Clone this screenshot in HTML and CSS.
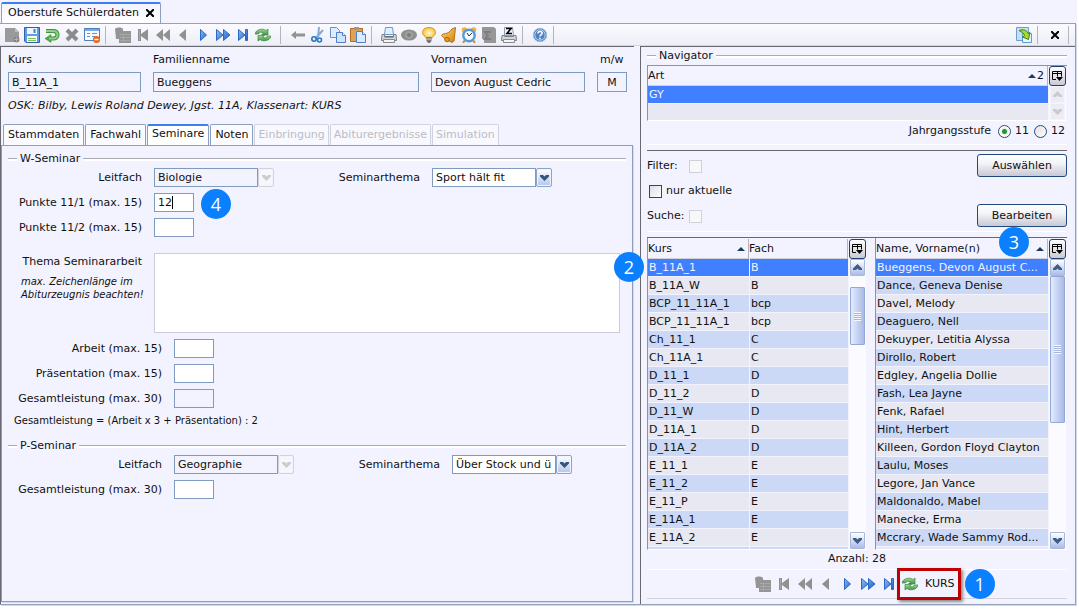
FILE: index.html
```html
<!DOCTYPE html>
<html lang="de">
<head>
<meta charset="utf-8">
<title>Oberstufe Schülerdaten</title>
<link rel="stylesheet" href="styles.css">
</head>
<body>
<svg class="sprite" aria-hidden="true">
  <defs>
    <linearGradient id="g-blue" x1="0" y1="0" x2="1" y2="1"><stop offset="0" stop-color="#8fc0f5"/><stop offset="1" stop-color="#1a5cc4"/></linearGradient>
    <linearGradient id="g-green" x1="0" y1="0" x2="0" y2="1"><stop offset="0" stop-color="#a5d896"/><stop offset="1" stop-color="#3c9440"/></linearGradient>
    <linearGradient id="g-gold" x1="0" y1="0" x2="1" y2="1"><stop offset="0" stop-color="#ffe27a"/><stop offset="1" stop-color="#cf7d0c"/></linearGradient>
    <radialGradient id="g-bulb"><stop offset="0" stop-color="#fffde0"/><stop offset="1" stop-color="#fbc02d"/></radialGradient>
    <symbol id="i-new" viewBox="0 0 16 16"><path d="M1 1h10l4 4v10H1z" fill="#9a9a9a"/><path d="M11 1v4h4z" fill="#bdbdbd"/><circle cx="12.500" cy="12.500" r="3" fill="#858585"/><path d="M12.500 10.500v4M10.500 12.500h4" stroke="#b5b5b5"/></symbol>
    <symbol id="i-save" viewBox="0 0 16 16"><path d="M.5.5h15v15H2L.5 14z" fill="#5f9de0" stroke="#2d62a8"/><path d="M3 1h10v6H3z" fill="#eef5ff"/><path d="M10.500 2v4" stroke="#4a7dc0" stroke-width="2"/><path d="M3 9h10v6H3z" fill="#fff"/><path d="M4 11.500h8M4 13.500h8" stroke="#78c65a"/></symbol>
    <symbol id="i-undo" viewBox="0 0 16 16"><path d="M2 4h7c3 0 4.500 1.500 4.500 3.700S12 11.500 9 11.500H6" fill="none" stroke="#3f9445" stroke-width="4"/><path d="M7 7.500v8L1 11.500z" fill="#4ba650" stroke="#3f9445" stroke-width=".6"/><path d="M2 4h7c3 0 4.500 1.500 4.500 3.700S12 11.500 9 11.500H5" fill="none" stroke="#8ed184" stroke-width="2"/></symbol>
    <symbol id="i-delete" viewBox="0 0 16 16"><path d="M3 3l10 10M13 3L3 13" stroke="#8c8c8c" stroke-width="4"/></symbol>
    <symbol id="i-form" viewBox="0 0 16 16"><path d="M.5 1.500h15v12H.5z" fill="#f6faff" stroke="#4b80bd"/><path d="M1 2h14v2H1z" fill="#79aae2"/><path d="M3 6.500h3M8 6.500h5M3 9.500h3M8 9.500h3" stroke="#6a94c8"/><circle cx="12.500" cy="12.500" r="3.500" fill="#e8641b"/><path d="M10.500 12.500h4" stroke="#fff" stroke-width="1.500"/></symbol>
    <symbol id="i-list" viewBox="0 0 16 16"><path d="M0 2c1-2 7-2 8 0v2h8v12H4v-4H1z" fill="#959595"/><path d="M5 7.500h10M5 10.500h10M5 13.500h10M8.500 7v8" stroke="#a8a8a8"/></symbol>
    <symbol id="i-first" viewBox="0 0 16 16"><path d="M3 2h3v5l7-5v12L6 9v5H3z" fill="#919191"/><path d="M4.500 3v10" stroke="#a8a8a8"/></symbol>
    <symbol id="i-rewind" viewBox="0 0 16 16"><path d="M8 2v12L1 8zM15 2v12L8 8z" fill="#919191"/></symbol>
    <symbol id="i-prev" viewBox="0 0 16 16"><path d="M11 2v12L4 8z" fill="#919191"/></symbol>
    <symbol id="i-next" viewBox="0 0 16 16"><path d="M5.500 2.500v11L11.500 8z" fill="url(#g-blue)" stroke="#2a69c8"/></symbol>
    <symbol id="i-forward" viewBox="0 0 16 16"><path d="M1.500 2.500v11L8 8zM8.500 2.500v11L15 8z" fill="url(#g-blue)" stroke="#2a69c8"/></symbol>
    <symbol id="i-last" viewBox="0 0 16 16"><path d="M3.500 2.500v11L10 8zM10.500 2.500h2v11h-2z" fill="url(#g-blue)" stroke="#2a69c8"/></symbol>
    <symbol id="i-refresh" viewBox="0 0 16 16"><path d="M0 7c1-5 8-6 11-3.500L13 2v6H6.500l2-2C6.500 4.800 4 5 3.500 7z" fill="url(#g-green)" stroke="#388a3c" stroke-width=".7"/><path d="M16 9c-1 5-8 6-11 3.500L3 14V8.500h6.500l-2 1.800c2 1 4.500.7 5-1.300z" fill="url(#g-green)" stroke="#388a3c" stroke-width=".7"/></symbol>
    <symbol id="i-back" viewBox="0 0 16 16"><path d="M1 8l5-4v2.500h9v3H6V12z" fill="#929292"/></symbol>
    <symbol id="i-cut" viewBox="0 0 16 16"><path d="M9 0l-1 10M13 3L6 11" stroke="#87aad2" stroke-width="2"/><circle cx="4" cy="12" r="2.200" fill="#dcecff" stroke="#2c76bd" stroke-width="1.600"/><circle cx="9.500" cy="13" r="2" fill="#dcecff" stroke="#2c76bd" stroke-width="1.600"/></symbol>
    <symbol id="i-copy" viewBox="0 0 16 16"><path d="M.5.500h6l3 3v7h-9z" fill="#dfebff" stroke="#6690ca"/><path d="M6.500 5.500h6l3 3v7h-9z" fill="#cfe2ff" stroke="#4e7fc4"/><path d="M12.500 5.500v3h3" fill="#fff" stroke="#4e7fc4"/></symbol>
    <symbol id="i-paste" viewBox="0 0 16 16"><path d="M.5 1.500h12v13H.5z" fill="#dda257" stroke="#b36b20"/><path d="M4 0h5v3H4z" fill="#999"/><path d="M6.500 4.500h6l3 3v8h-9z" fill="#dceaff" stroke="#4e7fc4"/><path d="M12.500 4.500v3h3" fill="#fff" stroke="#4e7fc4"/></symbol>
    <symbol id="i-print" viewBox="0 0 16 16"><path d="M4.500.500h7l1 7h-9z" fill="#dff0ff" stroke="#6d9cc8"/><path d="M1 7.500h2.500v2h9v-2H15l.5 6H.5z" fill="#d4d6db" stroke="#7b8087"/><path d="M3.500 10h9" stroke="#5a6067"/><path d="M2.500 12.500h11v3h-11z" fill="#f4f4f4" stroke="#8a8a8a"/></symbol>
    <symbol id="i-eye" viewBox="0 0 16 16"><ellipse cx="8" cy="8" rx="8" ry="5.500" fill="#8f8f8f"/><circle cx="8" cy="8" r="3.800" fill="#a2a2a2"/><circle cx="8" cy="8" r="2" fill="#7b7b7b"/></symbol>
    <symbol id="i-bulb" viewBox="0 0 16 16"><path d="M8 .500c4.500 0 6.500 2.500 6.500 5 0 3-3 3.500-4 6H5.500c-1-2.500-4-3-4-6 0-2.500 2-5 6.500-5z" fill="url(#g-bulb)" stroke="#dc9520"/><path d="M5.500 10h5v4l-1.500 2H7l-1.500-2z" fill="#777"/><path d="M6 12h4" stroke="#ddd"/></symbol>
    <symbol id="i-bell" viewBox="0 0 16 16"><path d="M14.500.500L13 14l-2 1.500C8 14 3 11.500.5 8.500L2 7c4 0 7-2 9-5z" fill="url(#g-gold)" stroke="#b96d10"/><circle cx="6" cy="12.500" r="2.300" fill="#e39a20" stroke="#a9620c"/></symbol>
    <symbol id="i-clock" viewBox="0 0 16 16"><circle cx="3.500" cy="3" r="2.800" fill="#f2b13e"/><circle cx="12.500" cy="3" r="2.800" fill="#f2b13e"/><path d="M4 13l-2 3M12 13l2 3" stroke="#d8882a" stroke-width="2"/><circle cx="8" cy="8.500" r="5.700" fill="#f4faff" stroke="#5a9ad4" stroke-width="2.400"/><path d="M6 6l2 3 3-3" fill="none" stroke="#333"/></symbol>
    <symbol id="i-sum" viewBox="0 0 16 16"><path d="M1 0h12l2 2v14H3v-4H1z" fill="#979797"/><path d="M10 5H4l3 3.500L4 12h6" fill="none" stroke="#7f7f7f" stroke-width="2"/></symbol>
    <symbol id="i-printz" viewBox="0 0 16 16"><path d="M3.500.500h8l1 8h-9z" fill="#e8f2fb" stroke="#8aa2b8"/><path d="M1 8.500h2.500v1h9v-1H15l.5 5H.5z" fill="#d4d6db" stroke="#7b8087"/><path d="M5 1.500h5L6 6.500h5" fill="none" stroke="#000" stroke-width="1.600"/><path d="M2.500 12.500h11v3h-11z" fill="#f4f4f4" stroke="#8a8a8a"/></symbol>
    <symbol id="i-help" viewBox="0 0 16 16"><circle cx="8" cy="8" r="6.700" fill="#4c83c4" stroke="#9bb9dd"/><circle cx="8" cy="8" r="5.200" fill="none" stroke="#d5e4f5" stroke-width=".8"/><path d="M6 6.500c0-3 4.200-2.500 4.200-.3C10.200 7.700 8 7.700 8 9.500M8 10.700v1.600" fill="none" stroke="#fff" stroke-width="1.500"/></symbol>
    <symbol id="i-export" viewBox="0 0 16 16"><path d="M.5.500h12v13H.5z" fill="#c4e0f8" stroke="#6ca0cc"/><path d="M6.500 6.500h9v9h-9z" fill="#e8f6ff" stroke="#5c9cd0"/><path d="M3 3.500c4-1.500 8-.5 9 3l2-1-1.500 7-6-2.500 2-1.200C8 6.500 6 5 3 3.500z" fill="#a2dc2c" stroke="#3d7d1c"/></symbol>
    <symbol id="i-columns" viewBox="0 0 13 12"><path d="M1.500 1.500h9v5M1.500 1.500v8H5M1 3.500h10M6.500 1.500v5" fill="none" stroke="#000"/><path d="M5 7h7l-3.500 4z" fill="#000"/></symbol>
    <symbol id="i-down" viewBox="0 0 9 7"><path d="M0 1h3l1.500 1.500L6 1h3v1.500L4.500 7 0 2.500z" fill="currentColor"/></symbol>
    <symbol id="i-up" viewBox="0 0 9 7"><path d="M0 6h3l1.500-1.500L6 6h3V4.500L4.500 0 0 4.500z" fill="currentColor"/></symbol>
    <symbol id="i-sort" viewBox="0 0 8 4"><path d="M0 4l4-4 4 4z" fill="#1c3a60"/></symbol>
    <symbol id="i-close" viewBox="0 0 8 8"><path d="M0 0l8 8M8 0L0 8" stroke="#000" stroke-width="2"/></symbol>
  </defs>
</svg>

<div class="window">
  <header class="doc-tabs">
    <div class="doc-tab">Oberstufe Schülerdaten<button class="plain" aria-label="Schließen"><svg class="close"><use href="#i-close"/></svg></button></div>
  </header>

  <div class="frame">
    <div class="toolbar">
      <button class="tool" aria-label="Neu"><svg><use href="#i-new"/></svg></button>
      <button class="tool" aria-label="Speichern"><svg><use href="#i-save"/></svg></button>
      <button class="tool" aria-label="Rückgängig"><svg><use href="#i-undo"/></svg></button>
      <button class="tool" aria-label="Löschen"><svg><use href="#i-delete"/></svg></button>
      <button class="tool" aria-label="Formular"><svg><use href="#i-form"/></svg></button>
      <span class="sep"></span>
      <button class="tool" aria-label="Liste"><svg><use href="#i-list"/></svg></button>
      <button class="tool" aria-label="Erster"><svg><use href="#i-first"/></svg></button>
      <button class="tool" aria-label="Schnell zurück"><svg><use href="#i-rewind"/></svg></button>
      <button class="tool" aria-label="Zurück"><svg><use href="#i-prev"/></svg></button>
      <button class="tool" aria-label="Weiter"><svg><use href="#i-next"/></svg></button>
      <button class="tool" aria-label="Schnell weiter"><svg><use href="#i-forward"/></svg></button>
      <button class="tool" aria-label="Letzter"><svg><use href="#i-last"/></svg></button>
      <button class="tool" aria-label="Aktualisieren"><svg><use href="#i-refresh"/></svg></button>
      <span class="sep sep-wide"></span>
      <button class="tool" aria-label="Vorige Maske"><svg><use href="#i-back"/></svg></button>
      <button class="tool" aria-label="Ausschneiden"><svg><use href="#i-cut"/></svg></button>
      <button class="tool" aria-label="Kopieren"><svg><use href="#i-copy"/></svg></button>
      <button class="tool" aria-label="Einfügen"><svg><use href="#i-paste"/></svg></button>
      <span class="sep"></span>
      <button class="tool" aria-label="Drucken"><svg><use href="#i-print"/></svg></button>
      <button class="tool" aria-label="Vorschau"><svg><use href="#i-eye"/></svg></button>
      <button class="tool" aria-label="Hinweis"><svg><use href="#i-bulb"/></svg></button>
      <button class="tool" aria-label="Benachrichtigung"><svg><use href="#i-bell"/></svg></button>
      <button class="tool" aria-label="Wiedervorlage"><svg><use href="#i-clock"/></svg></button>
      <button class="tool" aria-label="Summe"><svg><use href="#i-sum"/></svg></button>
      <button class="tool" aria-label="Zeugnis drucken"><svg><use href="#i-printz"/></svg></button>
      <span class="sep"></span>
      <button class="tool" aria-label="Hilfe"><svg><use href="#i-help"/></svg></button>
      <span class="sep"></span>
      <span class="spacer"></span>
      <button class="tool" aria-label="Exportieren"><svg><use href="#i-export"/></svg></button>
      <span class="sep"></span>
      <button class="tool" aria-label="Maske schließen"><svg class="close"><use href="#i-close"/></svg></button>
      <span class="sep"></span>
    </div>

    <main class="main">
      <section class="editor">
        <span class="callout callout-2">2</span>
        <div class="person">
          <label class="stack">Kurs<input class="box" value="B_11A_1" readonly></label>
          <label class="stack">Familienname<input class="box" value="Bueggens" readonly></label>
          <label class="stack">Vornamen<input class="box" value="Devon August Cedric" readonly></label>
          <label class="stack">m/w<input class="box center" value="M" readonly></label>
        </div>
        <p class="summary">OSK: Bilby, Lewis Roland Dewey, Jgst. 11A, Klassenart: KURS</p>

        <nav class="tabs">
          <button class="tab">Stammdaten</button>
          <button class="tab">Fachwahl</button>
          <button class="tab active">Seminare</button>
          <button class="tab">Noten</button>
          <button class="tab" disabled>Einbringung</button>
          <button class="tab" disabled>Abiturergebnisse</button>
          <button class="tab" disabled>Simulation</button>
        </nav>

        <div class="panel">
          <h2 class="legend">W-Seminar</h2>
          <div class="form form-top">
            <label for="w-fach">Leitfach</label>
            <div class="line">
              <span class="combo off"><select id="w-fach" disabled><option>Biologie</option></select><span class="arrow"><svg><use href="#i-down"/></svg></span></span>
              <label class="theme" for="w-thema">Seminarthema</label>
              <span class="combo"><select id="w-thema"><option>Sport hält fit</option></select><span class="arrow"><svg><use href="#i-down"/></svg></span></span>
            </div>
            <label for="p1">Punkte 11/1 (max. 15)</label>
            <div class="line"><span class="caret-box"><input id="p1" class="box points" value="12"></span><span class="callout callout-4">4</span></div>
            <label for="p2">Punkte 11/2 (max. 15)</label>
            <div class="line"><input id="p2" class="box points"></div>
          </div>
          <div class="form form-area">
            <div class="area-label">
              <label for="thema">Thema Seminararbeit</label>
              <p class="hint">max. Zeichenlänge im<br>Abiturzeugnis beachten!</p>
            </div>
            <textarea id="thema"></textarea>
          </div>
          <div class="form form-wide">
            <label for="arbeit">Arbeit (max. 15)</label>
            <div class="line"><input id="arbeit" class="box points"></div>
            <label for="praes">Präsentation (max. 15)</label>
            <div class="line"><input id="praes" class="box points"></div>
            <label for="gesamt">Gesamtleistung (max. 30)</label>
            <div class="line"><input id="gesamt" class="box points" readonly></div>
          </div>
          <p class="formula">Gesamtleistung = (Arbeit x 3 + Präsentation) : 2</p>

          <h2 class="legend">P-Seminar</h2>
          <div class="form form-wide">
            <label for="p-fach">Leitfach</label>
            <div class="line">
              <span class="combo off"><select id="p-fach" disabled><option>Geographie</option></select><span class="arrow"><svg><use href="#i-down"/></svg></span></span>
              <label class="theme" for="p-thema">Seminarthema</label>
              <span class="combo"><select id="p-thema"><option>Über Stock und ü</option></select><span class="arrow"><svg><use href="#i-down"/></svg></span></span>
            </div>
            <label for="p-gesamt">Gesamtleistung (max. 30)</label>
            <div class="line"><input id="p-gesamt" class="box points"></div>
          </div>
        </div>
      </section>

      <aside class="navigator">
        <h2 class="legend">Navigator</h2>
        <div class="grid-box art">
          <table>
            <thead><tr><th><span class="th">Art<span class="sort"><svg><use href="#i-sort"/></svg>2</span></span></th></tr></thead>
            <tbody><tr class="selected"><td>GY</td></tr><tr><td></td></tr></tbody>
          </table>
          <div class="side">
            <button class="cols" aria-label="Spalten"><svg><use href="#i-columns"/></svg></button>
            <div class="scroll off"><span class="scroll-btn"><svg><use href="#i-up"/></svg></span><span class="scroll-btn"><svg><use href="#i-down"/></svg></span></div>
          </div>
        </div>
        <div class="year">
          <span>Jahrgangsstufe</span>
          <label><input type="radio" name="stufe" checked>11</label>
          <label><input type="radio" name="stufe">12</label>
        </div>

        <div class="rule"></div>
        <div class="filters">
          <div class="checks">
            <div class="check"><label for="filter">Filter:</label><input id="filter" type="checkbox" disabled></div>
            <div class="check tight"><input id="aktuell" type="checkbox"><label for="aktuell">nur aktuelle</label></div>
            <div class="check"><label for="suche">Suche:</label><input id="suche" type="checkbox" disabled></div>
          </div>
          <div class="actions">
            <button class="push">Auswählen</button>
            <button class="push">Bearbeiten</button>
            <span class="callout callout-3">3</span>
          </div>
        </div>
        <div class="rule"></div>

        <div class="lists">
          <div class="grid-box kurse">
            <div class="clip"><table>
              <thead><tr><th class="col-kurs"><span class="th">Kurs<span class="sort"><svg><use href="#i-sort"/></svg></span></span></th><th>Fach</th></tr></thead>
              <tbody>
                <tr class="selected"><td>B_11A_1</td><td>B</td></tr>
                <tr><td>B_11A_W</td><td>B</td></tr>
                <tr><td>BCP_11_11A_1</td><td>bcp</td></tr>
                <tr><td>BCP_11_11A_1</td><td>bcp</td></tr>
                <tr><td>Ch_11_1</td><td>C</td></tr>
                <tr><td>Ch_11A_1</td><td>C</td></tr>
                <tr><td>D_11_1</td><td>D</td></tr>
                <tr><td>D_11_2</td><td>D</td></tr>
                <tr><td>D_11_W</td><td>D</td></tr>
                <tr><td>D_11A_1</td><td>D</td></tr>
                <tr><td>D_11A_2</td><td>D</td></tr>
                <tr><td>E_11_1</td><td>E</td></tr>
                <tr><td>E_11_2</td><td>E</td></tr>
                <tr><td>E_11_P</td><td>E</td></tr>
                <tr><td>E_11A_1</td><td>E</td></tr>
                <tr><td>E_11A_2</td><td>E</td></tr>
                <tr><td></td><td></td></tr>
              </tbody>
            </table></div>
            <div class="side">
              <button class="cols" aria-label="Spalten"><svg><use href="#i-columns"/></svg></button>
              <div class="scroll"><span class="scroll-btn"><svg><use href="#i-up"/></svg></span><span class="track"><span class="thumb short"></span></span><span class="scroll-btn"><svg><use href="#i-down"/></svg></span></div>
            </div>
          </div>
          <div class="grid-box namen">
            <div class="clip"><table>
              <thead><tr><th><span class="th">Name, Vorname(n)<span class="sort"><svg><use href="#i-sort"/></svg></span></span></th></tr></thead>
              <tbody>
                <tr class="selected"><td>Bueggens, Devon August C...</td></tr>
                <tr><td>Dance, Geneva Denise</td></tr>
                <tr><td>Davel, Melody</td></tr>
                <tr><td>Deaguero, Nell</td></tr>
                <tr><td>Dekuyper, Letitia Alyssa</td></tr>
                <tr><td>Dirollo, Robert</td></tr>
                <tr><td>Edgley, Angelia Dollie</td></tr>
                <tr><td>Fash, Lea Jayne</td></tr>
                <tr><td>Fenk, Rafael</td></tr>
                <tr><td>Hint, Herbert</td></tr>
                <tr><td>Killeen, Gordon Floyd Clayton</td></tr>
                <tr><td>Laulu, Moses</td></tr>
                <tr><td>Legore, Jan Vance</td></tr>
                <tr><td>Maldonaldo, Mabel</td></tr>
                <tr><td>Manecke, Erma</td></tr>
                <tr><td>Mccrary, Wade Sammy Rod...</td></tr>
                <tr><td></td></tr>
              </tbody>
            </table></div>
            <div class="side">
              <button class="cols" aria-label="Spalten"><svg><use href="#i-columns"/></svg></button>
              <div class="scroll"><span class="scroll-btn"><svg><use href="#i-up"/></svg></span><span class="track"><span class="thumb long"></span></span><span class="scroll-btn"><svg><use href="#i-down"/></svg></span></div>
            </div>
          </div>
        </div>
        <p class="count">Anzahl: 28</p>
        <footer class="pager">
          <div class="steps">
            <button class="tool" aria-label="Liste"><svg><use href="#i-list"/></svg></button>
            <button class="tool" aria-label="Erster"><svg><use href="#i-first"/></svg></button>
            <button class="tool" aria-label="Schnell zurück"><svg><use href="#i-rewind"/></svg></button>
            <button class="tool" aria-label="Zurück"><svg><use href="#i-prev"/></svg></button>
            <button class="tool" aria-label="Weiter"><svg><use href="#i-next"/></svg></button>
            <button class="tool" aria-label="Schnell weiter"><svg><use href="#i-forward"/></svg></button>
            <button class="tool" aria-label="Letzter"><svg><use href="#i-last"/></svg></button>
          </div>
          <button class="marked"><svg><use href="#i-refresh"/></svg>KURS</button>
          <span class="callout">1</span>
        </footer>
      </aside>
    </main>
  </div>
</div>
</body>
</html>
```

FILE: styles.css
```css
* { box-sizing: border-box; }

body {
  margin: 0;
  background: #fff;
  color: #111;
  font: 11px/14px "DejaVu Sans", Verdana, sans-serif;
}

button, input, select, textarea {
  margin: 0;
  padding: 0;
  border: 0;
  border-radius: 0;
  background: none;
  color: inherit;
  font: inherit;
}

h2, p { margin: 0; font-size: 11px; font-weight: normal; }
svg { display: block; width: 16px; height: 16px; }
.sprite { position: absolute; width: 0; height: 0; }

.window {
  display: flex;
  flex-direction: column;
  min-height: 100vh;
  padding-bottom: 4px;
  margin-right: 2px;
}

.doc-tabs { padding: 2px 1px 0; background: #f3f3ff; }
.doc-tab {
  display: inline-flex;
  align-items: center;
  gap: 7px;
  height: 21px;
  padding: 0 6px 2px;
  border: 1px solid #8c9fc0;
  border-top: 2px solid #3d7df0;
  border-bottom: 0;
  border-radius: 2px 2px 0 0;
  background: linear-gradient(#f3f3ff, #fff);
  vertical-align: top;
}
.plain { display: flex; }
.close { width: 8px; height: 8px; }

.frame {
  display: flex;
  flex: 1;
  flex-direction: column;
  margin-right: 1px;
  border: solid #92a2be;
  border-width: 1px 1px 1px 0;
  background: #f3f3ff;
  box-shadow: 1px 1px 0 #d5daea;
}

.toolbar {
  display: flex;
  align-items: center;
  height: 22px;
  padding: 0 6px 0 2px;
  border-bottom: 1px solid #d5d5de;
  background: linear-gradient(#fafaff, #eeeef8);
}
.tool { display: flex; align-items: center; justify-content: center; width: 20px; height: 20px; }
.sep { width: 1px; height: 18px; margin: 0 7px 0 3px; background: #b4b4bd; }
.sep-wide { margin-left: 7px; }
.sep:last-child { margin-right: 0; }
.spacer { flex: 1; }

.main { display: flex; flex: 1; gap: 6px; }

.editor {
  position: relative;
  display: flex;
  flex: 1;
  flex-direction: column;
  padding: 6px 1px 2px 0;
  border-top: 1px solid #686870;
  border-left: 1px solid #686870;
  min-width: 0;
}

.person {
  display: grid;
  grid-template-columns: 133fr 266fr 154fr 30fr;
  gap: 12px;
  padding: 0 6px 0 7px;
}
.stack { display: flex; flex-direction: column; gap: 5px; }
.stack:last-child { text-indent: 3px; }
.box {
  width: 100%;
  min-width: 0;
  height: 20px;
  padding: 0 3px;
  border: 1px solid #7f9bc0;
  background: #fff;
}
.box:read-only { background: #f3f3ff; }
.center { text-align: center; text-indent: 0; }
.summary { padding: 7px 7px 0; font-style: italic; }

.tabs { display: flex; align-items: stretch; gap: 1px; height: 21px; margin-top: 11px; padding-left: 2px; }
.tab {
  padding: 0 4px;
  border: 1px solid #8c9fc0;
  border-bottom: 0;
  border-radius: 2px 2px 0 0;
  background: #fbfbff;
  white-space: nowrap;
}
.tab.active { padding-bottom: 4px; border-top: 2px solid #3d7df0; background: #fff; }
.tab:disabled { padding: 0 3px; border-color: #d0d2df; background: #f8f8ff; color: #bcbcc6; }

.panel {
  flex: 1;
  padding: 6px;
  border: 1px solid #8c9fc0;
  box-shadow: 1px 1px 0 #d5daea;
}

.legend { display: flex; align-items: center; gap: 3px; }
.legend::before, .legend::after {
  content: "";
  height: 2px;
  border-top: 1px solid #a9a9b3;
  background: #fff;
}
.legend::before { width: 9px; }
.legend::after { flex: 1; }

.form { display: grid; grid-template-columns: 134px 1fr; gap: 6px 12px; align-items: center; }
.form > label { text-align: right; white-space: nowrap; }
.form-top { padding-top: 2px; }
.form-wide { grid-template-columns: 154px 1fr; padding-top: 2px; }
.line { position: relative; display: flex; align-items: center; height: 19px; }
.points { width: 40px; height: 19px; }
.caret-box { position: relative; }
.caret-box::after {
  content: "";
  position: absolute;
  top: 3px;
  left: 18px;
  width: 1px;
  height: 13px;
  background: #000;
}

.combo { display: flex; width: 120px; height: 19px; }
.combo select {
  appearance: none;
  flex: 1;
  min-width: 0;
  padding: 0 3px;
  border: 1px solid #7f9bc0;
  background: #fff;
  color: #111;
  opacity: 1;
  text-overflow: clip;
}
.arrow {
  display: flex;
  align-items: center;
  justify-content: center;
  width: 16px;
  border: 1px solid #8ba5c9;
  border-radius: 2px;
  background: linear-gradient(#fff, #b4c5ea);
  box-shadow: inset 0 0 0 1px #f0f4ff;
  color: #35557f;
}
.arrow svg, .scroll-btn svg { width: 9px; height: 7px; }
.combo.off select { background: #f3f3ff; }
.combo.off .arrow { border-color: #d2d2dd; background: #f6f6fb; color: #ccccd5; }
.theme { width: 158px; padding-right: 12px; text-align: right; }

.form-area { align-items: start; padding: 16px 6px 0 0; }
.area-label { display: flex; flex-direction: column; gap: 6px; padding-top: 2px; text-align: right; }
.hint, .formula { font-size: 10px; line-height: 13px; }
.hint { padding-left: 13px; font-style: italic; text-align: left; white-space: nowrap; }
textarea {
  display: block;
  width: 100%;
  height: 80px;
  border: 1px solid #ccccd8;
  background: #fff;
  resize: none;
}
.form-area + .form-wide { padding-top: 6px; }
.formula { padding: 6px 6px 12px; }

.callout {
  display: flex;
  align-items: center;
  justify-content: center;
  width: 30px;
  height: 30px;
  border-radius: 50%;
  background: #0a80ff;
  color: #fff;
  font: 18px/30px "Open Sans", sans-serif;
}
.callout-2 { position: absolute; z-index: 2; top: 205px; right: -10px; }
.callout-3 { position: absolute; z-index: 2; top: 76px; right: 38px; }
.callout-4 { position: absolute; top: -4px; left: 47px; }

.navigator {
  display: flex;
  flex-direction: column;
  width: 435px;
  padding: 2px 8px 5px 6px;
  border-top: 1px solid #686870;
  border-left: 1px solid #686870;
}

.grid-box { display: flex; border: 1px solid #92929c; border-right: 0; border-bottom-color: #fff; min-width: 0; }
.grid-box table { width: 100%; border-collapse: separate; border-spacing: 0; table-layout: fixed; }
.grid-box th {
  height: 20px;
  padding: 0 1px 0 0;
  border-right: 1px solid #b4b4bd;
  border-bottom: 1px solid #d0d0da;
  font-weight: normal;
  text-align: left;
}
.th { display: flex; align-items: center; justify-content: space-between; }
.sort { display: flex; align-items: center; gap: 1px; padding-right: 2px; }
.sort svg { width: 8px; height: 4px; }
.grid-box td {
  height: 18px;
  padding: 0 1px;
  border-bottom: 1px solid #f3f3ff;
  background: #e7e8f1;
  overflow: hidden;
  text-overflow: ellipsis;
  white-space: nowrap;
}
.grid-box td + td { border-left: 1px solid #f3f3ff; }
.col-kurs { width: 101px; }
.kurse tbody tr:nth-child(odd) td, .namen tbody tr:nth-child(even) td { background: #ccd9f6; }
.grid-box tbody tr.selected td { background: #4080ff; color: #f3f3ff; }
.art { margin-top: 2px; height: 56px; overflow: hidden; }

.clip { flex: 1; min-width: 0; height: 310px; overflow: hidden; }
.side { display: flex; flex: none; flex-direction: column; width: 19px; padding: 0 1px; }
.cols {
  display: flex;
  align-items: center;
  justify-content: center;
  width: 17px;
  height: 20px;
  border: 1px solid #1f3f74;
  border-radius: 3px;
  background: linear-gradient(#fff, #c9c9d4);
}
.cols svg { width: 13px; height: 12px; }
.scroll { display: flex; flex: 1; flex-direction: column; width: 17px; padding: 0 1px; background: #fbfbff; }
.scroll-btn {
  display: flex;
  align-items: center;
  justify-content: center;
  height: 17px;
  border: 1px solid #a9b9dc;
  border-radius: 1px;
  background: linear-gradient(#fff, #aabce8);
  color: #3d5c88;
}
.scroll.off .scroll-btn { border-color: #f3f3ff; background: #ececf2; color: #cacad2; }
.track { flex: 1; padding-top: 11px; }
.thumb {
  display: flex;
  align-items: center;
  justify-content: center;
  height: 58px;
  border: 1px solid #93a8d6;
  border-radius: 1px;
  background: linear-gradient(90deg, #e2ebff, #a9bae4);
}
.thumb::after {
  content: "";
  width: 7px;
  height: 9px;
  background: repeating-linear-gradient(#f6f9ff 0 1px, #a5b6dd 1px 2px);
}
.namen .track { padding-top: 0; }
.thumb.long { height: 147px; }

.year { display: flex; align-items: center; justify-content: flex-end; gap: 5px; padding: 3px 2px 0 0; }
.year span { padding-right: 2px; }
.year label { display: flex; align-items: center; gap: 4px; }
input[type="radio"], input[type="checkbox"] {
  appearance: none;
  flex: none;
  width: 13px;
  height: 13px;
  border: 1px solid #234a7c;
  background: linear-gradient(135deg, #dedee6, #fff);
}
input[type="radio"] { border-radius: 50%; }
input[type="radio"]:checked { background: radial-gradient(#259332 0 2px, #e2f3e5 3px, #fff 5px); }
input[type="checkbox"]:disabled { border-color: #d0d0da; background: #f8f8fa; }

.rule { height: 7px; margin-top: 6px; border-top: 1px solid #fff; border-bottom: 1px solid #686870; }
.filters { position: relative; display: flex; justify-content: space-between; padding-top: 3px; }
.checks { display: flex; flex-direction: column; gap: 11px; padding-top: 5px; }
.check { display: flex; align-items: center; height: 14px; }
.check label:first-child { width: 42px; }
.check.tight { gap: 4px; padding-left: 2px; }
.actions { display: flex; flex-direction: column; gap: 27px; width: 90px; }
.push {
  height: 23px;
  border: 1px solid #234a7c;
  border-radius: 3px;
  background: linear-gradient(#fff, #f3f3f8 40%, #c9c9d6);
}
.filters + .rule { margin-top: 4px; }

.lists { display: grid; grid-template-columns: 220fr 192fr; gap: 8px; }
.lists .grid-box { border-top: 0; padding-top: 1px; }
.count { padding: 2px 0 3px; text-align: center; }

.pager {
  display: flex;
  align-items: center;
  height: 30px;
  padding-left: 108px;
  border-top: 1px solid #fff;
  border-bottom: 1px solid #d3d3de;
}
.steps { display: flex; gap: 5px; }
.steps .tool { width: 16px; }
.marked {
  display: flex;
  align-items: center;
  gap: 7px;
  height: 32px;
  padding: 0 3px 0 2px;
  border: 3px solid #c00000;
  box-shadow: 2px 2px 3px #888;
  white-space: nowrap;
}
.pager .callout { margin-left: 4px; }
```
